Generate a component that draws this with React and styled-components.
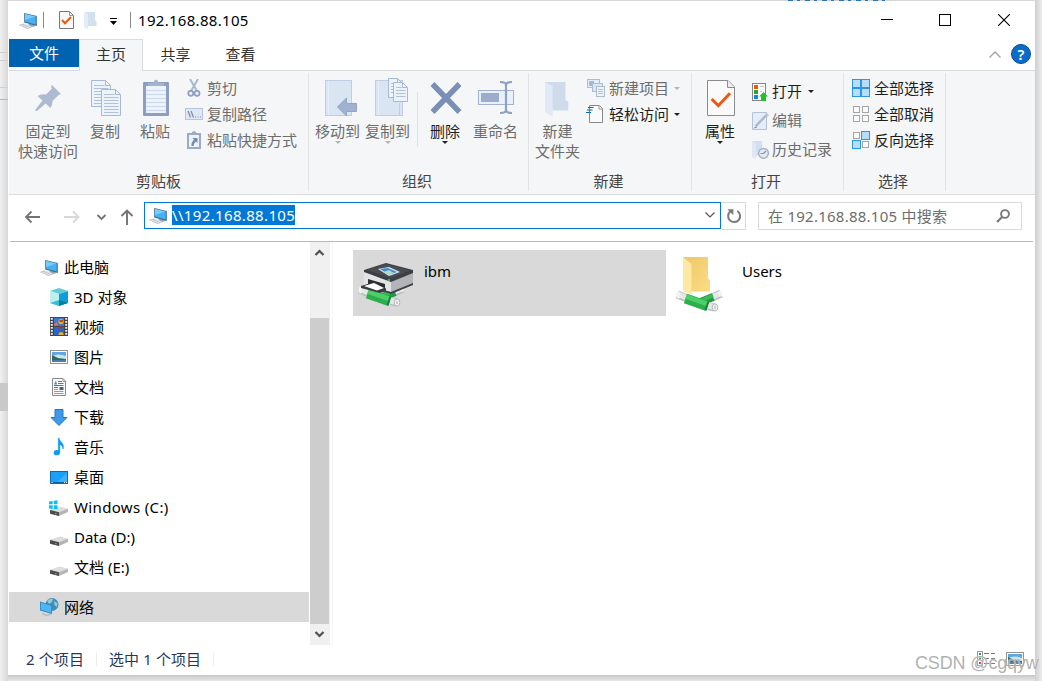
import styled, { createGlobalStyle } from 'styled-components';

const DISABLED = '#6d6d6d';

const TREE = [
    { label: '此电脑', icon: 'computer', root: true },
    { label: '3D 对象', icon: 'cube' },
    { label: '视频', icon: 'video' },
    { label: '图片', icon: 'picture' },
    { label: '文档', icon: 'document' },
    { label: '下载', icon: 'download' },
    { label: '音乐', icon: 'music' },
    { label: '桌面', icon: 'desktop' },
    { label: 'Windows (C:)', icon: 'system', wide: true },
    { label: 'Data (D:)', icon: 'drive' },
    { label: '文档 (E:)', icon: 'drive' },
];

const TABS = ['共享', '查看'];

export default function App(){
    return (
        <Desktop>
            <GlobalStyle />
            <Window>
                <TitleBar />
                <Tabs>
                    <FileTab>文件</FileTab>
                    <HomeTab>主页</HomeTab>
                    {TABS.map((item) => <Tab key={item}>{item}</Tab>)}
                    <Spacer />
                    <svg width="14" height="10" viewBox="0 0 14 10">
                        <path d="M1.5 7.5 L7 2 L12.5 7.5" fill="none" stroke="#a0a0a0" strokeWidth="1.3" />
                    </svg>
                    <Help>?</Help>
                </Tabs>
                <Ribbon />
                <NavBar />
                <Content>
                    <Tree />
                    <Scrollbar>
                        <ScrollArrow $h={76}>
                            <svg width="20" height="22"><path d="M5.5 13 L9.5 9 L13.5 13" fill="none" stroke="#505050" strokeWidth="2.2" /></svg>
                        </ScrollArrow>
                        <Thumb />
                        <ScrollArrow $h={21}>
                            <svg width="20" height="21"><path d="M5.5 8 L9.5 12 L13.5 8" fill="none" stroke="#505050" strokeWidth="2.2" /></svg>
                        </ScrollArrow>
                    </Scrollbar>
                    <Files>
                        <Tile $selected>
                            <PrinterIcon />
                            <span>ibm</span>
                        </Tile>
                        <Tile>
                            <SharedFolderIcon />
                            <span>Users</span>
                        </Tile>
                    </Files>
                </Content>
                <StatusBar>
                    <StatusText $w={71}>2 个项目</StatusText>
                    <StatusText $w={105}>选中 1 个项目</StatusText>
                    <Spacer />
                    <DetailsViewIcon />
                    <LargeViewIcon />
                </StatusBar>
            </Window>
            <Watermark>CSDN @cgqyw</Watermark>
        </Desktop>
    )
}

function TitleBar(){
    return (
        <TitleRow>
            <TreeIcon name="computer" />
            <TitleDivider $left={5} $right={15} />
            <svg width="15" height="18" viewBox="0 0 15 18">
                <path d="M.5 .5 H10.5 L14.5 4.5 V17.5 H.5Z" fill="#f8f8f8" stroke="#777" />
                <path d="M10.5 .5 V4.5 H14.5" fill="none" stroke="#999" />
                <path d="M3 9 L6 12.2 L12 6" fill="none" stroke="#e8590c" strokeWidth="2" />
            </svg>
            <FolderSmall />
            <MoreArrow width="8" height="8" viewBox="0 0 8 8">
                <path d="M0 .5 H7" stroke="#000" />
                <path d="M0 3 H7 L3.5 7Z" />
            </MoreArrow>
            <TitleDivider $left={12} $right={7} />
            <Title>192.168.88.105</Title>
            <Spacer />
            <WindowButtons>
                <svg width="12" height="12"><path d="M0 5.5 H12" stroke="#000" /></svg>
                <svg width="12" height="12"><rect x=".5" y=".5" width="11" height="11" fill="none" stroke="#000" /></svg>
                <svg width="12" height="12"><path d="M0 0 L12 12 M12 0 L0 12" stroke="#000" strokeWidth="1.1" /></svg>
            </WindowButtons>
        </TitleRow>
    )
}

function FolderSmall(){
    return (
        <FolderSvg width="14" height="18" viewBox="0 0 14 18">
            <path d="M1 1 H11 V9 L12.5 10.5 V15 H4Z" fill="#d3e0f0" />
            <path d="M0 .5 L4 3 V18 L0 16.5Z" fill="#e3ecf7" />
        </FolderSvg>
    )
}

function Ribbon(){
    return (
        <RibbonBar>
            <Group $w={299}>
                <GroupBody $left={5}>
                    <Big $w={68}><PinIcon />固定到<br />快速访问</Big>
                    <Big $w={46}><CopyIcon />复制</Big>
                    <Big $w={54}><PasteIcon />粘贴</Big>
                    <SmallList $left={3}>
                        <Small><CutIcon />剪切</Small>
                        <Small><PathIcon />复制路径</Small>
                        <Small><PasteLinkIcon />粘贴快捷方式</Small>
                    </SmallList>
                </GroupBody>
                <Caption>剪贴板</Caption>
            </Group>
            <Divider />
            <Group $w={219}>
                <GroupBody $left={4}>
                    <Big $w={49}><MoveToIcon />移动到<Caret $color="#b4b4b4" /></Big>
                    <Big $w={51}><CopyToIcon />复制到<Caret $color="#b4b4b4" /></Big>
                    <ShortDivider />
                    <Big $w={54} $enabled><DeleteIcon />删除<Caret $color="#222" /></Big>
                    <Big $w={47}><RenameIcon />重命名</Big>
                </GroupBody>
                <Caption>组织</Caption>
            </Group>
            <Divider />
            <Group $w={162}>
                <GroupBody $left={4}>
                    <Big $w={49}><NewFolderIcon />新建<br />文件夹</Big>
                    <SmallList $left={4} $gap={3}>
                        <Small><NewItemIcon />新建项目<Caret $color="#b4b4b4" $inline={5} /></Small>
                        <Small $enabled><EasyAccessIcon />轻松访问<Caret $color="#222" $inline={5} /></Small>
                    </SmallList>
                </GroupBody>
                <Caption>新建</Caption>
            </Group>
            <Divider />
            <Group $w={151}>
                <GroupBody $left={5}>
                    <Big $w={46} $enabled><PropertiesIcon />属性<Caret $color="#222" /></Big>
                    <SmallList $left={9} $top={6} $row={29} $gap={0}>
                        <Small $enabled><OpenIcon />打开<Caret $color="#222" $inline={6} /></Small>
                        <Small><EditIcon />编辑</Small>
                        <Small><HistoryIcon />历史记录</Small>
                    </SmallList>
                </GroupBody>
                <Caption>打开</Caption>
            </Group>
            <Divider />
            <Group $w={101}>
                <GroupBody $left={8}>
                    <SmallList $left={0}>
                        <Small $enabled><GridIcon on={[0, 1, 2, 3]} joined />全部选择</Small>
                        <Small $enabled><GridIcon on={[]} />全部取消</Small>
                        <Small $enabled><GridIcon on={[1, 2]} />反向选择</Small>
                    </SmallList>
                </GroupBody>
                <Caption>选择</Caption>
            </Group>
            <Divider />
        </RibbonBar>
    )
}

function NavBar(){
    return (
        <NavRow>
            <svg width="128" height="28" viewBox="1 0 128 28">
                <path d="M17 15 H31 M22.5 9.5 L17 15 L22.5 20.5" fill="none" stroke="#737373" strokeWidth="1.8" />
                <path d="M55 15 H69 M64 9.5 L69.5 15 L64 20.5" fill="none" stroke="#d8d8d8" strokeWidth="1.8" />
                <path d="M88.5 13 L92.5 17 L96.5 13" fill="none" stroke="#737373" strokeWidth="1.8" />
                <path d="M118 23 V8.5 M112.5 14 L118 8.5 L123.5 14" fill="none" stroke="#737373" strokeWidth="1.9" />
            </svg>
            <Address>
                <TreeIcon name="computer" />
                <Selection>\\192.168.88.105</Selection>
                <Spacer />
                <svg width="12" height="8" viewBox="0 0 12 8">
                    <path d="M1.5 1.5 L6 6 L10.5 1.5" fill="none" stroke="#555" strokeWidth="1.2" />
                </svg>
            </Address>
            <Refresh>
                <svg width="16" height="16" viewBox="0 0 16 16">
                    <path d="M11.3 3 A6 6 0 1 1 4.4 3.4" fill="none" stroke="#7a7a7a" strokeWidth="2" />
                    <path d="M1.4 1.2 H7.4 V7.2Z" fill="#7a7a7a" />
                </svg>
            </Refresh>
            <Search>
                在 192.168.88.105 中搜索
                <Spacer />
                <svg width="14" height="14" viewBox="0 0 14 14">
                    <circle cx="9" cy="5" r="3.9" fill="none" stroke="#777" strokeWidth="1.9" />
                    <path d="M6 8 L1 13" stroke="#777" strokeWidth="2.2" />
                </svg>
            </Search>
        </NavRow>
    )
}

function Tree(){
    return (
        <TreeList>
            {TREE.map((item) =>
                <TreeItem key={item.label} $root={item.root} $wide={item.wide}>
                    <TreeIcon name={item.icon} />
                    {item.label}
                </TreeItem>
            )}
            <TreeItem $root $active>
                <TreeIcon name="network" />
                网络
            </TreeItem>
        </TreeList>
    )
}

const TREE_ART = {
    computer: (
        <g transform="translate(0 2)">
            <path d="M10 12.5 L13 11 L18 14 L14 15Z" fill="#98a4ae" />
            <path d="M6.2 1 L18.8 4 V14 L6.2 10.5Z" fill="#3c6d94" />
            <path d="M7 2 L17.7 4.6 V12.5 L7 9.6Z" fill="#45b1f4" />
            <path d="M7 2 L17.7 4.6 L7 8Z" fill="#78cbfa" />
            <path d="M.5 13 L5.5 11.5 L15 15 L9.5 17Z" fill="#b9c2c9" />
            <path d="M3 13 L11 16 M6 12.2 L13 15" stroke="#e4e8eb" />
        </g>
    ),
    cube: (
        <>
            <path d="M1 4 L10 1 L19 4 L10 7Z" fill="#5fcbd8" />
            <path d="M1 4 L10 7 V19 L1 16Z" fill="#bdeef0" />
            <path d="M10 7 L19 4 V16 L10 19Z" fill="#0e9ed6" />
            <path d="M1 16 L10 13 V19Z" fill="#39bfcd" />
            <path d="M10 13 L19 16 L10 19Z" fill="#067f9e" />
        </>
    ),
    video: (
        <>
            <rect x="1" y="0" width="18" height="19" fill="#454545" />
            <path d="M2.8 1 V19 M17.2 1 V19" stroke="#eee" strokeWidth="2" strokeDasharray="1.7 1.3" />
            <rect x="5" y="1" width="10" height="8" fill="#3f78cf" />
            <rect x="5" y="10" width="10" height="8" fill="#2b66c5" />
            <circle cx="12" cy="4.5" r="2.6" fill="#e7b021" />
            <path d="M5 7.5 L8 5 L9 8.5 H5Z" fill="#e4688b" />
            <path d="M10.5 4 H14 M12 9 V12" stroke="#b32a25" strokeWidth="1.5" />
            <path d="M9.5 18 A2.5 3 0 0 1 14.5 18Z" fill="#e7b021" />
        </>
    ),
    picture: <Photo />,
    document: (
        <>
            <path d="M3.5 1.5 H14 L16.5 4 V18.5 H3.5Z" fill="#fafafa" stroke="#8a8a8a" />
            <path d="M14 1.5 V4.5 H16.5" fill="none" stroke="#999" />
            <path d="M5 7.5 L7 3.5 L8 7.5Z" fill="#3790cc" />
            <path d="M9 4.5 H13 M9 6.5 H14.5 M5 8.5 H14.5 M5 10.5 H9" stroke="#2d83bb" />
            <path d="M5 12.5 H9 M5 14.5 H14.5 M5 16.5 H14.5" stroke="#999" />
            <rect x="10.5" y="10" width="4" height="3" fill="#44657b" />
        </>
    ),
    download: <path d="M6 2.5 H14 V10.5 H18 L10 18.5 L2 10.5 H6Z" fill="#3c9be8" stroke="#2478bd" />,
    music: (
        <>
            <path d="M10 1 C10.5 5 16 6 14 12 C13.5 8.5 12 8 10.8 7.5 V15.5 H9.3 V1Z" fill="#0d9ceb" stroke="#0d9ceb" strokeWidth=".6" />
            <ellipse cx="7.8" cy="15.7" rx="3.1" ry="2.6" fill="#0d9ceb" />
        </>
    ),
    desktop: (
        <>
            <rect x="1.5" y="4.5" width="17" height="12" fill="#18a0fb" stroke="#096bb4" />
            <path d="M8 15 L18 6 V15Z" fill="#3db2ff" />
            <path d="M2 15.5 H18" stroke="#075f9f" />
            <path d="M2.5 15.5 H3.5 M15 15.5 H16 M17 15.5 H18" stroke="#fff" />
        </>
    ),
    system: (
        <>
            <Disk />
            <path d="M0 4.5 L3.7 4 V7.2 H0Z M4.7 3.8 L8.5 3.2 V7.2 H4.7Z M0 8.2 H3.7 V12 L0 11.5Z M4.7 8.2 H8.5 V12.3 L4.7 12Z" fill="#13bdf0" />
        </>
    ),
    drive: <Disk />,
    network: (
        <>
            <circle cx="13" cy="7.5" r="6.5" fill="#3d8fb7" />
            <path d="M8 4 Q11 1 14 2 L13 5 L10 7Z M15 4 L18.5 6 L18 10 L15.5 8Z" fill="#8fcbd9" />
            <path d="M3 16.5 L8 18.5 L12 17" fill="none" stroke="#b7bdc2" strokeWidth="1.5" />
            <path d="M1 4.5 L13 8 V17 L1 13.5Z" fill="#3983b7" />
            <path d="M1.8 5.5 L12.2 8.7 V15.7 L1.8 12.7Z" fill="#4cb7f8" />
        </>
    ),
};

function TreeIcon({ name }){
    return <svg width="20" height="20" viewBox="0 0 20 20">{TREE_ART[name]}</svg>
}

function Disk(){
    return (
        <g transform="translate(0 2)">
            <path d="M1 11 L11 8 L19 10 V13 L10 17 L1 14.5Z" fill="#b5b5b5" />
            <path d="M1 10.8 L11 7.5 L19 9.7 L10 13.2Z" fill="#dededf" />
            <path d="M1 11 L10 13.2 V17 L1 14.7Z" fill="#4b4d4c" />
            <rect x="6" y="14" width="1.6" height="1.3" fill="#47bb56" />
        </g>
    )
}

function Photo(){
    return (
        <>
            <rect x="1.5" y="3.5" width="17" height="13" fill="#fff" stroke="#929292" />
            <rect x="3" y="5" width="14" height="10" fill="#5fa6e3" />
            <path d="M3 9 Q9 6 17 9 V12 H3Z" fill="#cce3f0" />
            <path d="M3 8 L9 11 L17 12 V13.5 H3Z" fill="#34695b" />
            <path d="M3 13 H17 V15 H3Z" fill="#477fa7" />
        </>
    )
}

/* large ribbon icons */

function PinIcon(){
    return (
        <svg width="68" height="44">
            <path d="M38 9 L47 18 L44.5 19 L38.5 25 Q38.5 29 36.5 32 L31.5 27.5 L23 35 H21.5 V33.5 L28.5 24.5 L23.5 20 Q27 17.8 32 18.5 L38 12.5 L37 11Z" fill="#adbad2" />
        </svg>
    )
}

function Page({ x, y, w, h }){
    const lines = [];
    for (let i = 5; i < h - 2; i += 3) lines.push(i);
    return (
        <g transform={`translate(${x} ${y})`}>
            <path d={`M0 0 H${w - 5} L${w} 5 V${h} H0Z`} fill="#edf3fb" stroke="#a6b8d2" />
            <path d={`M${w - 5} 0 V5 H${w}`} fill="none" stroke="#a6b8d2" />
            {lines.map((i) => <path key={i} d={`M2.5 ${i} H${i < 6 ? w - 6 : w - 2}`} stroke="#b3c1d8" />)}
        </g>
    )
}

function CopyIcon(){
    return (
        <svg width="46" height="44">
            <Page x={9.5} y={4.5} w={19} h={26} />
            <Page x={19.5} y={13.5} w={19} h={26} />
        </svg>
    )
}

function PasteIcon(){
    return (
        <svg width="54" height="44">
            <rect x="15" y="6" width="26" height="34" rx="1" fill="#8c9fc1" />
            <rect x="18" y="10" width="20" height="27" fill="#edf3fb" />
            <path d="M18 14.5 H38 M18 18.5 H38 M18 22.5 H38 M18 26.5 H38 M18 30.5 H38 M18 34.5 H38" stroke="#cbd9ea" />
            <path d="M20 10 V7 H25 Q28 0 31 7 H36 V10Z" fill="#a6b3ca" />
        </svg>
    )
}

function MoveToIcon(){
    return (
        <svg width="49" height="44">
            <rect x="12.5" y="4.5" width="26" height="35" fill="#dae5f3" stroke="#bfcee3" />
            <path d="M15.5 5 V39" stroke="#e7eef8" />
            <path d="M24.5 31 L33.5 22 V27.5 H43.5 V35.5 H33.5 V40Z" fill="#a2b2ce" stroke="#93a5c6" />
        </svg>
    )
}

function CopyToIcon(){
    return (
        <svg width="51" height="44">
            <rect x="13.5" y="4.5" width="27" height="35" fill="#dae5f3" stroke="#bfcee3" />
            <path d="M16.5 5 V39" stroke="#e7eef8" />
            <path d="M37.5 27 V39" stroke="#bfcee3" />
            <Page x={26.5} y={2.5} w={14} h={19} />
            <Page x={31.5} y={6.5} w={14} h={19} />
        </svg>
    )
}

function DeleteIcon(){
    return (
        <svg width="54" height="44">
            <path d="M14.5 8 L41.5 36 M41.5 8 L14.5 36" stroke="#7a8fb5" strokeWidth="5.5" />
        </svg>
    )
}

function RenameIcon(){
    return (
        <svg width="47" height="44">
            <rect x="6.5" y="14.5" width="35" height="14" fill="#e8f1fb" stroke="#9fb3d0" />
            <rect x="9" y="17" width="18" height="9" fill="#9badca" />
            <path d="M28 6 Q34 6 34 9 V34 Q34 37 28 37 M40 6 Q34 6 34 9 M34 34 Q34 37 40 37" fill="none" stroke="#8ea1c1" strokeWidth="2.2" />
        </svg>
    )
}

function NewFolderIcon(){
    return (
        <svg width="49" height="44">
            <path d="M12 6 H32.5 V24 L35.3 26 V34.5 H19.5Z" fill="#cfdbeb" />
            <path d="M12 6 L19.7 10 V40.5 L12 36Z" fill="#e0e9f5" />
        </svg>
    )
}

function PropertiesIcon(){
    return (
        <svg width="46" height="44">
            <path d="M10.5 4.5 H31 L37.5 11 V39.5 H10.5Z" fill="#fafafa" stroke="#8b8b8b" />
            <path d="M30.5 4.5 V11.5 H37.5" fill="#eee" stroke="#8b8b8b" />
            <path d="M14.7 23 L21.3 29.7 L33 17.3" fill="none" stroke="#f0560f" strokeWidth="3" />
        </svg>
    )
}

/* small ribbon icons */

function CutIcon(){
    return (
        <svg width="20" height="18">
            <path d="M5 0 L12 12 M13 0 L6 12" stroke="#a9b7cc" strokeWidth="2" />
            <circle cx="5.8" cy="14.3" r="2.5" fill="none" stroke="#8ea0be" strokeWidth="1.8" />
            <circle cx="12" cy="14.3" r="2.5" fill="none" stroke="#8ea0be" strokeWidth="1.8" />
        </svg>
    )
}

function PathIcon(){
    return (
        <svg width="20" height="18">
            <rect x=".5" y="3.5" width="17" height="11" fill="#dfe9f6" stroke="#b4c4da" />
            <path d="M3 6 L5.5 12.5 M6 6 L8.5 12.5" stroke="#7f8fae" strokeWidth="1.3" />
            <path d="M10 12 H11 M12.5 12 H13.5 M15 12 H16" stroke="#7f8fae" />
        </svg>
    )
}

function PasteLinkIcon(){
    return (
        <svg width="20" height="18">
            <rect x="2" y="2" width="14" height="16" fill="#9aabc9" />
            <rect x="4" y="4" width="10" height="12" fill="#edf3fb" />
            <path d="M6 3 Q9 -3 12 3 V4 H6Z" fill="#9aabc9" />
            <path d="M7.5 7 H12.5 V12 L11 10.5 Q8.5 12 8.5 15 H6.5 Q6 11.5 9 8.8Z" fill="#7389b0" />
        </svg>
    )
}

function NewItemIcon(){
    return (
        <svg width="20" height="18">
            <rect x="1.5" y=".5" width="12" height="8" fill="#e6eef9" stroke="#abbcd5" />
            <rect x="3" y="2" width="5" height="5" fill="#a6b7d2" />
            <rect x="6.5" y="4.5" width="10" height="8" fill="#dce7f4" stroke="#abbcd5" />
            <rect x="10.5" y="7.5" width="8" height="10" fill="#edf3fb" stroke="#abbcd5" />
            <path d="M12 10.5 H17 M12 12.5 H17 M12 14.5 H17" stroke="#b6c4d9" />
        </svg>
    )
}

function EasyAccessIcon(){
    return (
        <svg width="20" height="18">
            <path d="M3.5 .5 H13.5 L16.5 3.5 V17.5 H3.5Z" fill="#fafafa" stroke="#888" />
            <path d="M13 .5 V4 H16.5" fill="none" stroke="#999" />
            <path d="M2 2.5 H7.5 M1 5 H6.5 M0 7.5 H5" stroke="#0068b5" strokeWidth="1.2" />
        </svg>
    )
}

function OpenIcon(){
    return (
        <svg width="20" height="18">
            <rect x=".5" y=".5" width="13" height="17" fill="#fbfbfb" stroke="#858585" />
            <rect x="2" y="2" width="4" height="4" fill="#f0570f" />
            <rect x="2" y="7" width="4" height="4" fill="#17ad38" />
            <rect x="2" y="12" width="4" height="4" fill="#1885d7" />
            <path d="M8 3.5 H12 M8 8.5 H10" stroke="#c4c4c4" />
            <path d="M7 13.5 L11.5 9 L16 13.5 H14 V18 H9 V13.5Z" fill="#21c229" />
        </svg>
    )
}

function EditIcon(){
    return (
        <svg width="20" height="18">
            <path d="M.5 .5 H14.5 V17.5 H.5Z" fill="#e4edf9" stroke="#b3c2d9" />
            <path d="M3.5 14.5 L14 3.5" stroke="#aab9d0" strokeWidth="2.4" />
            <path d="M2 16 L5 15" stroke="#8092b0" />
            <path d="M13.5 1.5 L16.5 4" stroke="#bac6da" strokeWidth="2" />
        </svg>
    )
}

function HistoryIcon(){
    return (
        <svg width="20" height="18">
            <path d="M0 0 H10 V12 L4 15Z" fill="#d3dfee" />
            <path d="M0 0 L4 3 V18 L0 16Z" fill="#dfe8f4" />
            <circle cx="11.5" cy="12.3" r="4.9" fill="#e5eaf3" stroke="#a4b2ca" strokeWidth="1.5" />
            <path d="M11.5 12.5 L14 10 M11.5 12.5 H8.5" stroke="#8092b0" strokeWidth="1.2" />
        </svg>
    )
}

function GridIcon({ on, joined }){
    return (
        <svg width="20" height="18">
            {[0, 1, 2, 3].map((i) => {
                const x = (i % 2) * 9;
                const y = i > 1 ? 9 : 0;
                return on.includes(i)
                    ? <rect key={i} x={x + .5} y={y + .5} width="8" height="8" fill="#b6defa" stroke="#2b95e9" />
                    : <rect key={i} x={x + 1.5} y={y + 1.5} width="6" height="6" fill="#fafafa" stroke="#a5a5a5" />
            })}
            {joined && <path d="M9 0 V18 M0 9 H18" stroke="#2b95e9" strokeWidth="2" />}
        </svg>
    )
}

/* file tiles */

function Cable(){
    return (
        <>
            <path d="M6.5 44.5 L15 48 M41 47.5 L50 43.5" stroke="#bcc0c0" strokeWidth="8" />
            <path d="M6.5 44 L15 47.5 M41 47 L50 43" stroke="#e6e8e8" strokeWidth="5.6" />
            <ellipse cx="7.5" cy="45" rx="1.8" ry="3.6" fill="#f1f2f2" />
            <ellipse cx="49.3" cy="43.6" rx="1.6" ry="3.2" fill="#f1f2f2" />
            <path d="M26 53.5 L42 47" stroke="#1f9a42" strokeWidth="8" />
            <path d="M26 52 L42 45.5" stroke="#38ba55" strokeWidth="4" />
            <path d="M14.5 48.5 L36 56" stroke="#2cae4b" strokeWidth="10" />
            <path d="M15 46.5 L36.5 54" stroke="#4ccf66" strokeWidth="5" />
            <path d="M37.5 51.5 L34.5 60.5" stroke="#148340" strokeWidth="2.2" />
            <path d="M37.5 56 L43.5 57.5" stroke="#bcc0c0" strokeWidth="8" />
            <path d="M37.5 55.7 L43.5 57.2" stroke="#e4e7e7" strokeWidth="6" />
            <ellipse cx="44" cy="57.5" rx="2.8" ry="3.6" fill="#f2f2f2" stroke="#b5b8b8" />
            <ellipse cx="44" cy="57.5" rx="1.1" ry="1.6" fill="#c9cccc" />
        </>
    )
}

function PrinterIcon(){
    return (
        <svg width="71" height="66" viewBox="0 0 71 66">
            <g transform="translate(0 -5)"><Cable /></g>
            <path d="M11 22 L38 31 V42 L11 35Z" fill="#e3e4e6" />
            <path d="M38 31 L60 22 V34 L38 43Z" fill="#b2b4b7" />
            <path d="M11 35 L38 42 L60 33 V35 L38 44Z" fill="#3c4044" />
            <path d="M11 22 V20 L33 13 L60 20 V23 L38 32Z" fill="#3c4044" />
            <path d="M14 20 L33 14 L57 20.5 L38 28Z" fill="#4a4e53" />
            <path d="M25 19 L36 17 L47 22 L36 26Z" fill="#d7e9f5" />
            <path d="M27 19 L35 18 L44 22 L36 24.5Z" fill="#4389d0" />
            <path d="M30 22 L36 20 L41 23 L36 24.5Z" fill="#a8dcc4" />
            <path d="M15 29 L32 34 V40 L15 36Z" fill="#2b2e31" />
            <path d="M8 36 L21 32 L33 38.5 V41 L27 43 L8 38Z" fill="#393c40" />
            <path d="M11 36 L21 33 L31 38 L24 40.5Z" fill="#fff" />
            <circle cx="36" cy="30" r="1" fill="#41db59" />
        </svg>
    )
}

function SharedFolderIcon(){
    return (
        <svg width="71" height="66" viewBox="0 0 71 66">
            <defs>
                <linearGradient id="folder" x1="0" y1="0" x2="1" y2="1">
                    <stop offset="0" stopColor="#eec766" />
                    <stop offset="1" stopColor="#fbdc86" />
                </linearGradient>
            </defs>
            <path d="M12 7 H37 V28 L39 30.5 V41.5 H20Z" fill="url(#folder)" />
            <path d="M12 7 L20.5 14 V44.5 L12 41Z" fill="#ffe8a3" />
            <Cable />
        </svg>
    )
}

function DetailsViewIcon(){
    return (
        <svg width="19" height="16">
            <rect x=".5" y=".5" width="5" height="14" fill="#fff" stroke="#999" />
            <path d="M2 3 H4" stroke="#2d82b9" strokeWidth="2" />
            <path d="M2 7.5 H4" stroke="#24a366" strokeWidth="2" />
            <path d="M2 12 H4" stroke="#c8413b" strokeWidth="2" />
            <path d="M7 2.5 H12 M14 2.5 H18 M7 7.5 H12 M14 7.5 H18 M7 12.5 H12 M14 12.5 H18" stroke="#777" />
        </svg>
    )
}

function LargeViewIcon(){
    return <svg width="20" height="20" viewBox="0 0 20 20"><Photo /></svg>
}

const GlobalStyle = createGlobalStyle`
  * {
    box-sizing:border-box;
  }

  body {
    margin:0;
    overflow:hidden;
    font:15px/20px "Noto Sans", "Noto Sans CJK SC", sans-serif;
    color:#000;
  }

  svg {
    display:block;
    flex:none;
  }
`

const Desktop = styled.div`
  position:relative;
  width:1042px;
  height:681px;
  padding:1px 7px 6px 8px;
  background:
    repeating-linear-gradient(90deg, #2878b8 0 5px, #d4d4d4 5px 9px, #2878b8 9px 12px, #d4d4d4 12px 17px) 788px 0 / 102px 1px no-repeat,
    linear-gradient(#c9c9c9, #c9c9c9) 0 383px / 8px 28px no-repeat,
    linear-gradient(#d0d0d0, #d0d0d0) 0 52px / 8px 1px no-repeat,
    linear-gradient(#d0d0d0, #d0d0d0) 0 60px / 8px 1px no-repeat,
    linear-gradient(#d0d0d0, #d0d0d0) 0 87px / 8px 1px no-repeat,
    linear-gradient(#b8b8b8, #b8b8b8) 0 99px / 8px 1px no-repeat,
    linear-gradient(90deg, #f0f0f0, #d8d8d8) 0 0 / 8px 100% no-repeat,
    linear-gradient(90deg, #cfcfcf, #ececec) 100% 0 / 7px 100% no-repeat,
    linear-gradient(#c8c8c8, #e6e6e6) 0 100% / 100% 6px no-repeat,
    #d6d6d6;
`

const Window = styled.div`
  display:flex;
  flex-direction:column;
  height:674px;
  padding-left:1px;
  background:#fff;
`

const Spacer = styled.div`
  flex:1;
`

const TitleRow = styled.div`
  display:flex;
  align-items:center;
  height:38px;
  padding:0 25px 0 9px;
`

const TitleDivider = styled.div`
  width:1px;
  height:16px;
  margin:0 ${({ $right }) => $right}px 0 ${({ $left }) => $left}px;
  background:#8a8a8a;
`

const FolderSvg = styled.svg`
  margin:0 12px 0 10px;
`

const MoreArrow = styled.svg`
  margin-top:3px;
`

const Title = styled.div`
  letter-spacing:.3px;
`

const WindowButtons = styled.div`
  display:flex;
  gap:46px;

  svg:last-child {
    margin-left:1px;
  }
`

const Tabs = styled.div`
  display:flex;
  align-items:center;
  height:32px;
  padding-right:4px;
  border-bottom:1px solid #dadbdc;
`

const Tab = styled.div`
  width:65px;
  margin-bottom:2px;
  line-height:28px;
  text-align:center;
  color:#333;
`

const FileTab = styled(Tab)`
  width:70px;
  height:28px;
  margin-bottom:3px;
  background:#0063b1;
  color:#fff;
`

const HomeTab = styled(Tab)`
  width:64px;
  height:32px;
  margin-bottom:-1px;
  border:1px solid #dadbdc;
  border-bottom:0;
  background:#f5f6f7;
`

const Help = styled.div`
  width:20px;
  height:20px;
  margin:0 0 2px 9px;
  border:1px solid #084c8f;
  border-radius:50%;
  background:#0a6bc9;
  color:#fff;
  font-weight:600;
  line-height:18px;
  text-align:center;
`

const RibbonBar = styled.div`
  display:flex;
  height:124px;
  background:#f5f6f7;
  border-bottom:1px solid #dadbdc;
`

const Group = styled.div`
  display:flex;
  flex-direction:column;
  width:${({ $w }) => $w}px;

  &:not(:first-child) > :last-child {
    padding-right:3px;
  }
`

const GroupBody = styled.div`
  display:flex;
  flex:1;
  padding-left:${({ $left }) => $left}px;
`

const Caption = styled.div`
  height:26px;
  line-height:26px;
  text-align:center;
  color:#444;
`

const Divider = styled.div`
  width:1px;
  margin:2px 0 3px;
  background:#e2e3e4;
`

const ShortDivider = styled.div`
  width:1px;
  height:55px;
  margin:21px 0 0 4px;
  background:#e2e3e4;
`

const Big = styled.div`
  width:${({ $w }) => $w}px;
  padding-top:5px;
  line-height:20px;
  text-align:center;
  white-space:nowrap;
  color:${({ $enabled }) => $enabled ? '#1e1e1e' : DISABLED};

  svg {
    margin-bottom:1px;
  }
`

const Caret = styled.i`
  display:${({ $inline }) => $inline ? 'inline-block' : 'block'};
  width:0;
  margin:${({ $inline }) => $inline ? `0 0 0 ${$inline}px` : '0 auto'};
  border:3.5px solid transparent;
  border-top-color:${({ $color }) => $color};
  border-bottom:0;
`

const SmallList = styled.div`
  padding:${({ $top = 4 }) => $top}px 0 0 ${({ $left }) => $left}px;
  line-height:${({ $row = 26 }) => $row}px;

  svg {
    margin-right:${({ $gap = 2 }) => $gap}px;
  }
`

const Small = styled.div`
  display:flex;
  align-items:center;
  white-space:nowrap;
  color:${({ $enabled }) => $enabled ? '#1e1e1e' : DISABLED};
`

const NavRow = styled.div`
  display:flex;
  height:47px;
  margin:0 2px 0 1px;
  padding-top:7px;
  border-bottom:1px solid #b9b9b9;

  > svg {
    margin-right:6px;
  }
`

const Address = styled.div`
  display:flex;
  align-items:center;
  width:577px;
  height:27px;
  padding:0 4px 1px 3px;
  border:1px solid #0078d7;
`

const Selection = styled.div`
  height:20px;
  margin-left:4px;
  background:#0078d7;
  color:#fff;
  line-height:21px;
  letter-spacing:.35px;
`

const Refresh = styled.div`
  display:flex;
  align-items:center;
  justify-content:center;
  width:25px;
  height:28px;
  padding-left:1px;
  border:1px solid #d9d9d9;
  border-left:0;
`

const Search = styled.div`
  display:flex;
  align-items:center;
  width:264px;
  height:28px;
  margin-left:12px;
  padding:0 11px 0 9px;
  border:1px solid #d9d9d9;
  color:#6d6d6d;
  letter-spacing:.25px;
`

const Content = styled.div`
  display:flex;
  height:403px;
`

const TreeList = styled.div`
  width:300px;
  padding-top:10px;
`

const TreeItem = styled.div`
  display:flex;
  align-items:center;
  gap:5px;
  height:30px;
  margin-top:${({ $active }) => $active ? 10 : 0}px;
  padding-left:${({ $root }) => $root ? 30 : 40}px;
  background:${({ $active }) => $active ? '#d9d9d9' : 'none'};
  letter-spacing:${({ $wide }) => $wide ? '.35px' : 'normal'};
`

const Scrollbar = styled.div`
  display:flex;
  flex-direction:column;
  width:20px;
  margin:0 2px 0 1px;
  background:#f0f0f0;
`

const ScrollArrow = styled.div`
  height:${({ $h }) => $h}px;
`

const Thumb = styled.div`
  flex:1;
  width:19px;
  background:#cdcdcd;
`

const Files = styled.div`
  display:flex;
  flex:1;
  align-items:flex-start;
  gap:5px;
  padding:8px 0 0 20px;
  border-left:1px solid #f5f5f5;
`

const Tile = styled.div`
  display:flex;
  width:313px;
  height:66px;
  background:${({ $selected }) => $selected ? '#d9d9d9' : 'none'};
  line-height:42px;
`

const StatusBar = styled.div`
  display:flex;
  align-items:center;
  gap:9px;
  height:30px;
  padding:0 10px 2px 17px;
  color:#1e395b;
`

const StatusText = styled.div`
  width:${({ $w }) => $w}px;
  margin-right:3px;
  border-right:1px solid #ececec;
  line-height:14px;
  letter-spacing:.1px;
  white-space:nowrap;
`

const Watermark = styled.div`
  position:absolute;
  left:915px;
  top:651px;
  color:rgba(150, 150, 150, .75);
  font:18px/24px "Liberation Sans", sans-serif;
  letter-spacing:-.15px;
  white-space:nowrap;
  text-shadow:0 0 1px #fff;
`
